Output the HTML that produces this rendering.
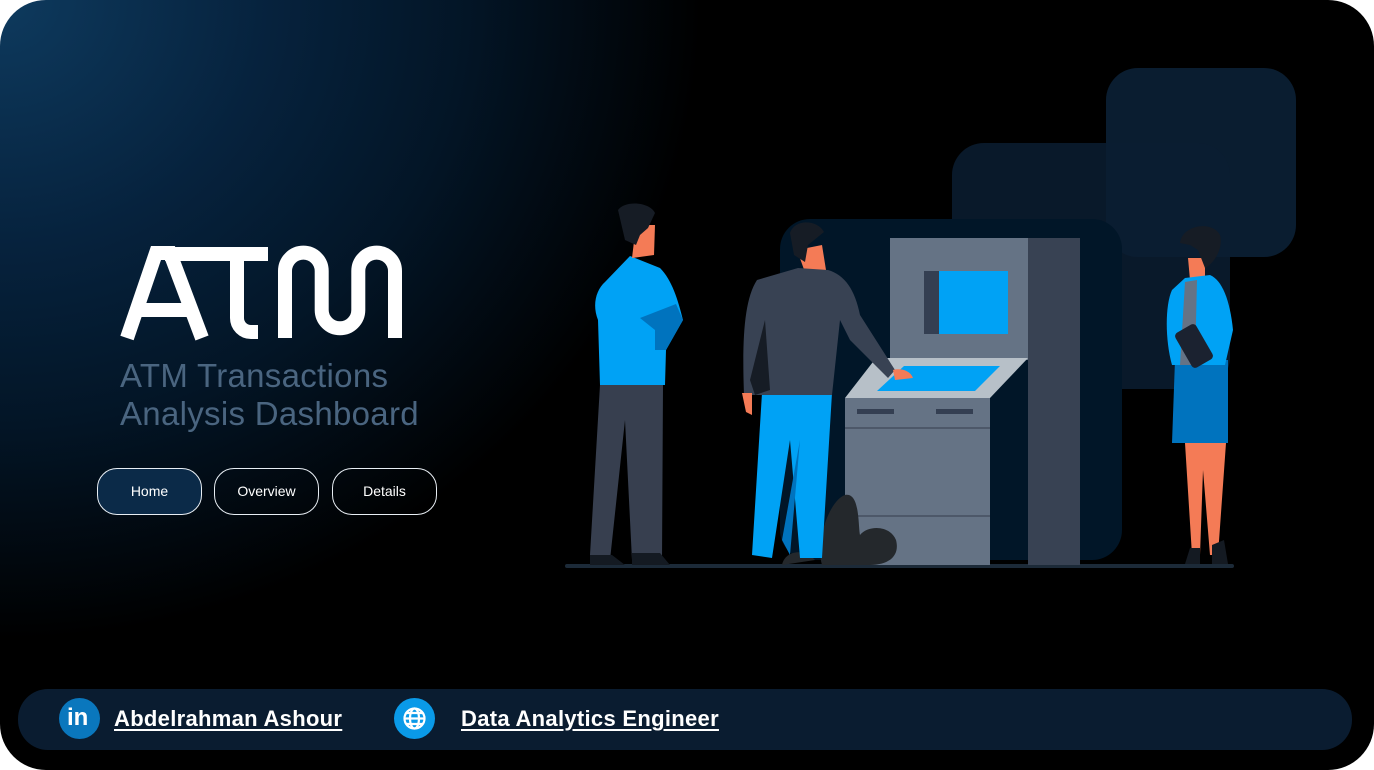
<!DOCTYPE html>
<html><head><meta charset="utf-8"><style>
html,body{margin:0;padding:0;background:#fff;width:1374px;height:770px;overflow:hidden}
.c{position:absolute;left:0;top:0;width:1374px;height:770px;border-radius:46px;overflow:hidden;
background:radial-gradient(ellipse 900px 820px at 0px 0px,#0e3a5e 0%,#06223d 30%,#031526 52%,#000 78%);}
.sub{position:absolute;left:120px;top:357px;color:#4a6580;font:33px/38px "Liberation Sans",sans-serif;letter-spacing:0.3px}
.btn{position:absolute;top:468px;width:105px;height:47px;border:1px solid #e8eef4;border-radius:20px;box-sizing:border-box;color:#fff;font:14px/45px "Liberation Sans",sans-serif;text-align:center}
.bar{position:absolute;left:18px;top:689px;width:1334px;height:61px;border-radius:30px;background:#0a1c30}
.ic{position:absolute;top:698px;width:41px;height:41px;border-radius:50%}
.lk{position:absolute;top:706px;color:#fff;font:bold 22px/26px "Liberation Sans",sans-serif;text-decoration:underline;text-underline-offset:3px;letter-spacing:0.3px}
</style></head><body>
<div class="c">
<svg width="1374" height="770" style="position:absolute;left:0;top:0">
 <g fill="none" stroke="#fff" stroke-width="14">
  <path d="M127 338 L156 253 L170 253 L202 338" stroke-linejoin="miter"/>
  <path d="M140 310 H190"/>
  <path d="M165 254 H268"/>
  <path d="M237 254 V318 A14 14 0 0 0 251 332 H258"/>
  <path d="M285 338 V271 A18.3 18.3 0 0 1 321.7 271 V310 A18.3 18.3 0 0 0 358.3 310 V271 A18.3 18.3 0 0 1 395 271 V338"/>
 </g>
 <rect x="1106" y="68" width="190" height="189" rx="32" fill="#0b2035" opacity="0.9"/>
 <rect x="952" y="143" width="278" height="246" rx="32" fill="#0a1d31" opacity="0.85"/>
 <rect x="780" y="219" width="342" height="341" rx="30" fill="#011628"/>
 <rect x="565" y="564" width="669" height="4" rx="2" fill="#1c2a38"/>
 <rect x="890" y="238" width="138" height="122" fill="#657385"/>
 <rect x="1028" y="238" width="52" height="327" fill="#384253"/>
 <rect x="924" y="271" width="84" height="63" fill="#00a2f5"/>
 <rect x="924" y="271" width="15" height="63" fill="#343f52"/>
 <polygon points="845,398 876,358 1028,358 990,398" fill="#b7c0c8"/>
 <polygon points="877,391 904,366 1000,366 975,391" fill="#00a2f5"/>
 <rect x="845" y="398" width="145" height="167" fill="#657385"/>
 <rect x="857" y="409" width="37" height="5" fill="#343f52"/>
 <rect x="936" y="409" width="37" height="5" fill="#343f52"/>
 <rect x="845" y="427" width="145" height="2" fill="#4d5869"/>
 <rect x="845" y="515" width="145" height="2" fill="#4d5869"/>
 <path d="M822 565 C815 540 830 500 845 495 C860 492 858 525 860 535 C868 525 890 525 896 540 C900 555 890 565 870 565 Z M782 565 C785 550 805 548 815 560 Z" fill="#24282c"/>
 <path d="M600 385 L590 555 L610 560 L625 420 L632 560 L662 560 L663 385 Z" fill="#373f4f"/>
 <path d="M590 555 L612 555 L625 565 L590 565 Z M632 553 L660 553 L670 565 L632 565 Z" fill="#141a22"/>
 <path d="M605 282 C596 290 592 305 598 320 L600 385 L665 385 L666 350 L683 320 C678 300 672 280 660 268 L630 256 Z" fill="#00a2f5"/>
 <path d="M640 318 L655 330 L655 350 L666 350 L683 320 L676 304 Z" fill="#0073be"/>
 <path d="M636 225 L655 225 L654 255 L632 258 Z" fill="#f47b56"/>
 <path d="M618 210 C625 200 650 202 655 213 L648 228 L640 235 L636 245 L625 240 Z" fill="#161c25"/>
 <path d="M762 393 L752 555 L772 558 L790 440 L800 558 L822 558 L832 393 Z" fill="#00a2f5"/>
 <path d="M800 440 L790 555 L782 540 Z" fill="#0073be"/>
 <path d="M797 250 L822 245 L826 270 L806 275 Z" fill="#f47b56"/>
 <path d="M790 233 C795 218 818 220 824 232 L808 245 L805 262 L794 255 Z" fill="#161c25"/>
 <path d="M757 280 L798 268 L828 270 C845 275 855 290 860 315 L895 370 L888 378 L850 340 L840 320 L832 395 L762 395 L752 395 L744 395 C742 340 744 300 757 280 Z" fill="#384253"/>
 <path d="M765 320 L770 390 L755 395 L750 380 Z" fill="#161c25"/>
 <path d="M742 393 L752 393 L752 415 L746 412 Z" fill="#f47b56"/>
 <path d="M893 370 C900 368 910 370 913 378 L895 380 Z" fill="#f47b56"/>
 <path d="M1185 443 L1192 555 L1200 555 L1203 470 L1210 555 L1218 555 L1226 443 Z" fill="#f47b56"/>
 <path d="M1190 548 L1200 548 L1200 564 L1185 564 Z M1212 545 L1224 540 L1228 564 L1212 564 Z" fill="#141a22"/>
 <path d="M1175 360 L1228 360 L1228 443 L1172 443 Z" fill="#0073be"/>
 <path d="M1188 258 L1205 258 L1205 278 L1190 280 Z" fill="#f47b56"/>
 <path d="M1180 243 C1182 225 1212 220 1220 235 C1224 250 1212 265 1205 268 L1198 250 L1190 245 Z" fill="#161c25"/>
 <path d="M1185 278 L1172 290 C1165 305 1165 340 1172 365 L1225 365 L1233 330 C1230 300 1222 280 1210 275 Z" fill="#00a2f5"/>
 <path d="M1185 282 L1197 280 L1195 365 L1180 365 Z" fill="#657385"/>
 <rect x="1182" y="326" width="24" height="40" rx="4" transform="rotate(-30 1194 346)" fill="#1b2230"/>
</svg>
<div class="sub">ATM Transactions<br>Analysis Dashboard</div>
<div class="btn" style="left:97px;background:#0b2a48">Home</div>
<div class="btn" style="left:214px">Overview</div>
<div class="btn" style="left:332px">Details</div>
<div class="bar"></div>
<div class="ic" style="left:59px;background:#0a77bd"><span style="position:absolute;left:8px;top:6px;color:#fff;font:bold 24px/28px 'Liberation Sans',sans-serif">in</span></div>
<div class="ic" style="left:394px;background:#0a9ae8">
 <svg width="41" height="41" viewBox="0 0 41 41" style="position:absolute;left:0;top:0" fill="none" stroke="#fff" stroke-width="2.2"><circle cx="20.5" cy="20.5" r="10"/><ellipse cx="20.5" cy="20.5" rx="4.5" ry="10"/><path d="M10.5 20.5H30.5M12 15H29M12 26H29"/></svg>
</div>
<div class="lk" style="left:114px">Abdelrahman Ashour</div>
<div class="lk" style="left:461px">Data Analytics Engineer</div>
</div>
</body></html>
